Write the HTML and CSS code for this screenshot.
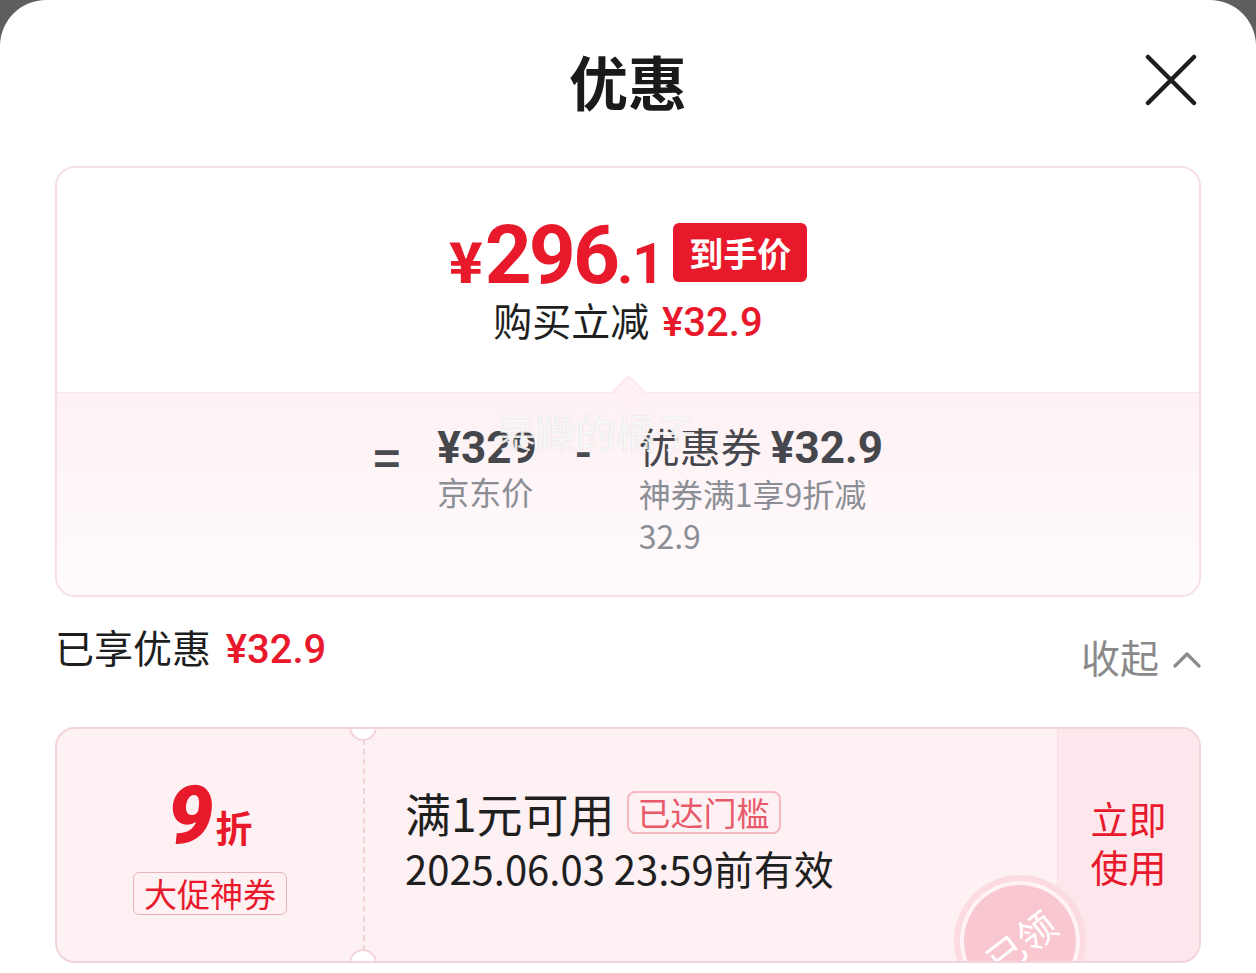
FILE: index.html
```
<!DOCTYPE html>
<html lang="zh-CN">
<head>
    <meta charset="UTF-8">
    <meta name="viewport" content="width=device-width, initial-scale=1.0">
    <title>优惠</title>
    <link rel="stylesheet" href="styles.css">
</head>
<body>
    <div class="sheet">
        <div class="header">
            <span></span>
            <h1 class="title">优惠</h1>
            <svg class="close" viewBox="0 0 52 52">
                <path d="M3 3 L49 49 M49 3 L3 49" stroke="#1e1e1e" stroke-width="4.5" stroke-linecap="round" fill="none"/>
            </svg>
        </div>

        <section class="summary">
            <div class="summary-top">
                <div class="price-row">
                    <span class="price"><span class="yen">¥</span><span class="int">296</span><span class="dec">.1</span></span>
                    <span class="badge">到手价</span>
                </div>
                <div class="save-row">购买立减 <span class="red">¥32.9</span></div>
            </div>
            <div class="summary-bottom">
                <div class="formula">
                    <span class="op">=</span>
                    <div class="term">
                        <div class="term-main"><b>¥329</b></div>
                        <div class="term-sub">京东价</div>
                    </div>
                    <span class="op minus">-</span>
                    <div class="term wide">
                        <div class="term-main">优惠券 <b>¥32.9</b></div>
                        <div class="term-sub">神券满1享9折减32.9</div>
                    </div>
                </div>
            </div>
        </section>

        <div class="enjoy-row">
            <div class="enjoy">已享优惠 <span class="red">¥32.9</span></div>
            <div class="fold">收起
                <svg class="chev" viewBox="0 0 28 17">
                    <path d="M2 15 L14 3 L26 15" stroke="#8c8c8c" stroke-width="3.2" stroke-linecap="round" stroke-linejoin="round" fill="none"/>
                </svg>
            </div>
        </div>

        <section class="coupon">
            <div class="coupon-left">
                <div class="rate"><span class="rate-num">9</span><span class="rate-unit">折</span></div>
                <span class="coupon-tag">大促神券</span>
            </div>
            <div class="coupon-mid">
                <div class="cond">满1元可用 <span class="reached">已达门槛</span></div>
                <div class="expire">2025.06.03 23:59前有效</div>
            </div>
            <div class="coupon-right">立即<br>使用</div>
            <div class="stamp"><span>已领</span></div>
        </section>

        <div class="watermark">暴躁的橘子</div>
    </div>
</body>
</html>
```
FILE: styles.css
```
body {
    margin: 0;
    background: #5e5e5e;
    font-family: "Noto Sans CJK SC", "Noto Sans", sans-serif;
    color: #1f1f1f;
}

.sheet {
    position: relative;
    background: #fff;
    border-radius: 46px 46px 0 0;
    height: 973px;
    overflow: hidden;
    padding: 0 55px;
    box-sizing: border-box;
}

.header {
    height: 166px;
    display: grid;
    grid-template-columns: 1fr auto 1fr;
    align-items: center;
}

.title {
    margin: 0;
    font-size: 59px;
    font-weight: 700;
    color: #1a1a1a;
    margin-top: -5px;
}

.close {
    justify-self: end;
    width: 52px;
    height: 52px;
    margin-right: 4px;
    margin-top: -6px;
}

.red {
    color: #e9192c;
}

/* summary card */
.summary {
    border: 2px solid #f7e0e5;
    border-radius: 20px;
    height: 431px;
    box-sizing: border-box;
    overflow: hidden;
    display: flex;
    flex-direction: column;
}

.summary-top {
    height: 224px;
    flex: none;
    display: flex;
    flex-direction: column;
    align-items: center;
    padding-top: 46px;
    box-sizing: border-box;
}

.price-row {
    display: flex;
    align-items: center;
    gap: 10px;
    margin-left: 0;
}

.price {
    color: #e9192c;
    font-family: Roboto, "Noto Sans CJK SC", sans-serif;
    font-weight: 700;
    line-height: 1;
    white-space: nowrap;
}

.yen {
    font-size: 56px;
    font-family: "Noto Sans CJK SC", sans-serif;
    font-weight: 900;
    margin-right: 2px;
}

.int {
    font-size: 82px;
    letter-spacing: -3px;
}

.dec {
    font-size: 56px;
    letter-spacing: -1px;
}

.badge {
    background: #e9192c;
    color: #fff;
    font-size: 34px;
    font-weight: 700;
    padding: 0 16px;
    height: 59px;
    line-height: 59px;
    border-radius: 6px;
    margin-top: -6px;
}

.save-row {
    font-size: 39px;
    color: #1f1f1f;
    margin-top: 0;
    line-height: 1.2;
}

.save-row .red {
    font-family: Roboto, "Noto Sans CJK SC", sans-serif;
    font-weight: 500;
    font-size: 40px;
    margin-left: 4px;
}

.summary-bottom {
    position: relative;
    flex: 1;
    border-top: 1px solid #f9e6ea;
    background: linear-gradient(#fdf1f4, #fffbfc);
}

.summary-bottom::before {
    content: "";
    position: absolute;
    left: 560px;
    top: -13px;
    width: 22px;
    height: 22px;
    background: #fdf1f4;
    border-top: 1px solid #f9e0e5;
    border-left: 1px solid #f9e0e5;
    transform: rotate(45deg);
}

.formula {
    display: flex;
    justify-content: center;
    align-items: flex-start;
    padding-top: 26px;
    margin-left: 6px;
}

.op {
    font-size: 46px;
    font-weight: 700;
    color: #4a4b51;
    line-height: 1;
    margin-top: 14px;
    width: 64px;
}

.minus {
    margin-top: 6px;
    padding-left: 38px;
    width: 24px;
}

.term {
    color: #46474d;
}

.term-main {
    font-size: 41px;
    line-height: 52px;
    white-space: nowrap;
}

.term-main b {
    font-family: Roboto, "Noto Sans CJK SC", sans-serif;
    font-weight: 700;
    font-size: 44px;
}

.term-sub {
    font-size: 32px;
    line-height: 42px;
    color: #8b8e95;
    margin-top: -4px;
}

.term.wide {
    width: 250px;
    margin-left: 40px;
}

.term.wide .term-sub {
    margin-top: -2px;
}

/* enjoyed row */
.enjoy-row {
    display: flex;
    justify-content: space-between;
    align-items: flex-start;
    height: 130px;
    padding-top: 24px;
    box-sizing: border-box;
}

.enjoy {
    font-size: 39px;
    color: #1f1f1f;
    line-height: 1.3;
}

.enjoy .red {
    font-family: Roboto, "Noto Sans CJK SC", sans-serif;
    font-weight: 500;
    font-size: 40px;
    margin-left: 6px;
}

.fold {
    display: flex;
    align-items: center;
    gap: 14px;
    font-size: 39px;
    color: #8a8a8a;
    line-height: 1.3;
    margin-top: 10px;
}

.chev {
    width: 28px;
    height: 17px;
    margin-top: 6px;
}

/* coupon */
.coupon {
    position: relative;
    display: flex;
    height: 236px;
    border: 2px solid #f4d4db;
    border-radius: 20px;
    background: #fdf1f4;
    box-sizing: border-box;
    overflow: hidden;
}

.coupon-left {
    position: relative;
    width: 308px;
    flex: none;
    border-right: 2px dashed #f1d2d9;
    display: flex;
    flex-direction: column;
    align-items: center;
    justify-content: center;
    padding-bottom: 6px;
    box-sizing: border-box;
}

.coupon-left::before,
.coupon-left::after {
    content: "";
    position: absolute;
    right: -14px;
    width: 24px;
    height: 24px;
    border-radius: 50%;
    background: #fff;
    border: 2px solid #f4d4db;
}

.coupon-left::before {
    top: -16px;
}

.coupon-left::after {
    bottom: -16px;
}

.rate {
    color: #e9192c;
    display: flex;
    align-items: baseline;
    margin-left: 0;
}

.rate-num {
    font-family: Roboto, sans-serif;
    font-weight: 900;
    font-style: italic;
    font-size: 82px;
    line-height: 1;
    margin-top: 4px;
}

.rate-unit {
    font-size: 37px;
    font-weight: 700;
    margin-left: 2px;
}

.coupon-tag {
    margin-top: 16px;
    font-size: 33px;
    color: #e9192c;
    border: 1px solid #e9b3bc;
    border-radius: 6px;
    padding: 0 10px;
    line-height: 41px;
}

.coupon-mid {
    flex: 1;
    padding-left: 40px;
    display: flex;
    flex-direction: column;
    justify-content: center;
    padding-bottom: 12px;
}

.cond {
    display: flex;
    align-items: center;
    font-size: 46px;
    color: #1f1f1f;
    line-height: 58px;
}

.reached {
    margin-left: 12px;
    font-size: 33px;
    color: #e85a6a;
    border: 2px solid #f6b7c0;
    border-radius: 8px;
    padding: 0 9px;
    line-height: 39px;
}

.expire {
    font-size: 40px;
    line-height: 54px;
    color: #1f1f1f;
}

.coupon-right {
    width: 142px;
    flex: none;
    background: #fde6ec;
    border-left: 1px solid #f9dfe5;
    color: #e9192c;
    font-size: 38px;
    line-height: 48px;
    text-align: center;
    display: flex;
    align-items: center;
    justify-content: center;
    padding-bottom: 6px;
    box-sizing: border-box;
}

.stamp {
    position: absolute;
    left: 897px;
    top: 146px;
    width: 132px;
    height: 132px;
    border-radius: 50%;
    background: #fcdbe1;
    display: flex;
    align-items: center;
    justify-content: center;
}

.stamp span {
    width: 112px;
    height: 112px;
    border-radius: 50%;
    background: #f9c7d0;
    box-shadow: 0 0 0 4px #fff3f5;
    color: #fff;
    font-size: 38px;
    display: flex;
    align-items: center;
    justify-content: center;
    transform: rotate(-38deg);
}

.watermark {
    position: absolute;
    left: 496px;
    top: 402px;
    font-size: 40px;
    color: rgba(255, 255, 255, 0.85);
    text-shadow: 0 0 1px rgba(120, 120, 120, 0.35);
    pointer-events: none;
}
```
